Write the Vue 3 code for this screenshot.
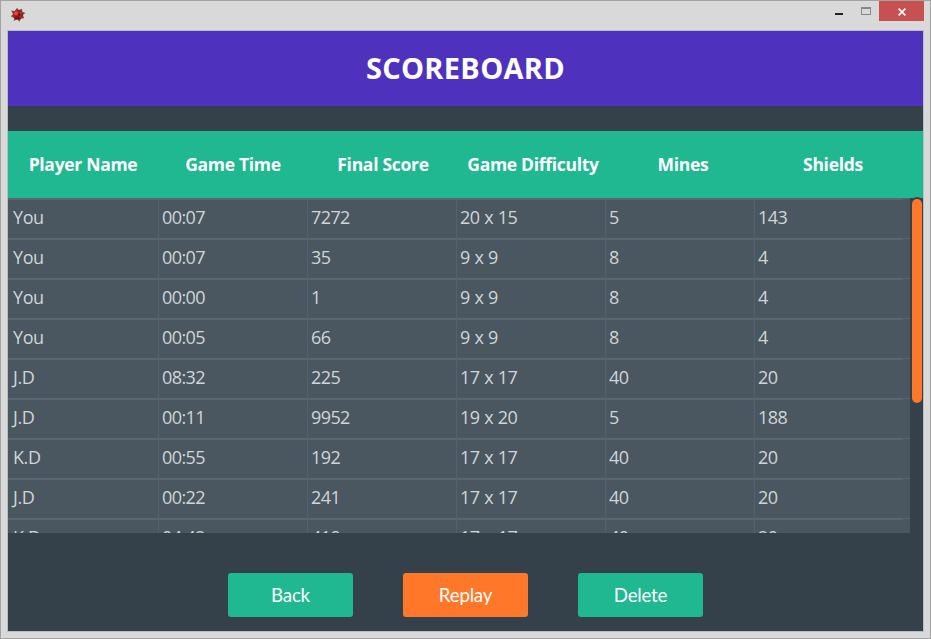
<script setup>
const columns = ['Player Name', 'Game Time', 'Final Score', 'Game Difficulty', 'Mines', 'Shields']
const rows = [
  ['You', '00:07', '7272', '20 x 15', '5', '143'],
  ['You', '00:07', '35', '9 x 9', '8', '4'],
  ['You', '00:00', '1', '9 x 9', '8', '4'],
  ['You', '00:05', '66', '9 x 9', '8', '4'],
  ['J.D', '08:32', '225', '17 x 17', '40', '20'],
  ['J.D', '00:11', '9952', '19 x 20', '5', '188'],
  ['K.D', '00:55', '192', '17 x 17', '40', '20'],
  ['J.D', '00:22', '241', '17 x 17', '40', '20'],
  ['K.D', '04:42', '419', '17 x 17', '40', '20'],
]
</script>

<template>
  <div class="window">
    <header class="titlebar">
      <svg class="app-icon" width="16" height="16" viewBox="0 0 16 16">
        <path d="M7 0.8 8.6 3.1 12.3 1.7 12 4.5 15.4 6.1 12.9 8 14.2 11.3 11.2 11.4 9.3 14.7 7.6 12.6 3.8 13.8 4 10.9 0.7 9.2 3 7.3 1.2 3.5 4.8 4.1Z" fill="#655" />
        <circle cx="8" cy="7.7" r="4.9" fill="#bd181b" />
        <path d="M8 3a5 5 0 0 1 4.8 6.2L9 8Z" fill="#8a271c" />
        <path d="M4 10.5a5 5 0 0 0 6.8 1L8 9Z" fill="#7a1015" />
        <circle cx="6" cy="6.2" r="2" fill="#ee4145" />
        <circle cx="9.2" cy="7.6" r="1.2" fill="#4f1712" />
        <circle cx="10.8" cy="5.8" r=".9" fill="#a65b3d" />
      </svg>
      <div class="controls">
        <span class="control minimize"><i></i></span>
        <span class="control maximize"><i></i></span>
        <span class="control close">
          <svg width="8" height="8" viewBox="0 0 8 8"><path d="M.6.6 7.4 7.4M7.4.6.6 7.4" stroke="#fff" stroke-width="1.6" /></svg>
        </span>
      </div>
    </header>
    <main class="content">
      <h1>SCOREBOARD</h1>
      <div class="table-head">
        <div v-for="c in columns" :key="c">{{ c }}</div>
      </div>
      <div class="viewport">
        <div class="rows">
          <div v-for="(row, i) in rows" :key="i" class="row">
            <div v-for="(cell, j) in row" :key="j" class="cell">{{ cell }}</div>
            <div class="filler"></div>
          </div>
        </div>
        <div class="track"><div class="thumb"></div></div>
      </div>
      <div class="actions">
        <button>Back</button>
        <button class="replay">Replay</button>
        <button>Delete</button>
      </div>
    </main>
  </div>
</template>

<style>
body { margin: 0; overflow: hidden; }
</style>

<style scoped>
.window {
  box-sizing: border-box;
  width: 931px;
  height: 639px;
  padding: 0 6px 6px;
  border: 1px solid #a3a3a3;
  background: #d9d9d9;
  font-family: "Open Sans", "Noto Sans", sans-serif;
}
.titlebar {
  display: flex;
  justify-content: space-between;
  height: 29px;
}
.app-icon { margin: 6px 0 0 3px; }
.controls { display: flex; height: 20px; }
.control { display: flex; justify-content: center; box-sizing: border-box; }
.minimize { width: 27px; padding-top: 12px; }
.minimize i { width: 8px; height: 2px; background: #222; }
.maximize { width: 27px; padding-top: 6px; }
.maximize i { box-sizing: border-box; width: 10px; height: 8px; border: 1px solid #888; border-top-width: 2px; }
.close { width: 45px; padding-top: 7px; background: #c75050; }
.content {
  box-sizing: border-box;
  height: 602px;
  border: 1px solid #b9bec1;
  background: #35414a;
}
h1 {
  height: 75px;
  margin: 0 0 25px;
  background: #4e32be;
  color: #fff;
  font-size: 29px;
  font-weight: 700;
  line-height: 73px;
  letter-spacing: 0.3px;
  text-align: center;
}
.table-head {
  display: grid;
  grid-template-columns: repeat(6, 150px);
  height: 67px;
  background: #20b890;
  color: #fff;
  font-size: 17.5px;
  font-weight: 700;
  line-height: 67px;
  letter-spacing: -0.3px;
  text-align: center;
}
.viewport { display: flex; height: 335px; }
.rows { width: 902px; height: 335px; overflow: hidden; }
.row { display: flex; height: 40px; background: #4a5760; }
.cell {
  box-sizing: border-box;
  width: 149px;
  padding-left: 3px;
  border-top: 2px solid #5a666f;
  border-right: 1px solid #54616a;
  color: #d0d5d7;
  font-size: 18px;
  font-weight: 370;
  line-height: 34px;
  letter-spacing: -0.6px;
  word-spacing: 0.7px;
  white-space: pre;
}
.cell:first-child { width: 151px; padding-left: 5px; letter-spacing: -0.4px; }
.cell:nth-child(6) { width: 148px; border-right: 0; }
.filler { flex: 1; height: 1px; background: #5a666f; }
.track { flex: 1; padding: 1px 1px 0 2px; }
.thumb {
  width: 10px;
  height: 204px;
  border-radius: 5px;
  background: #ff7728;
  box-shadow: 0 -1px 0 1px #35414a;
}
.actions { display: flex; justify-content: center; gap: 50px; padding-top: 40px; }
button {
  width: 125px;
  height: 44px;
  padding: 0;
  border: 0;
  border-radius: 3px;
  background: #20b890;
  color: #fff;
  font: 18.7px/44px Lato, sans-serif;
  letter-spacing: -0.2px;
}
.replay { background: #ff7728; }
</style>
